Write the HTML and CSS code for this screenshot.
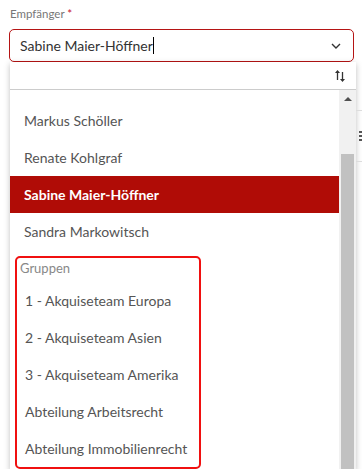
FILE: index.html
```html
<!DOCTYPE html>
<html lang="de">
<head>
    <meta charset="UTF-8">
    <meta name="viewport" content="width=device-width, initial-scale=1.0">
    <title>Empfänger</title>
    <link rel="stylesheet" href="styles.css">
</head>
<body>
<div class="page">
    <div class="backdrop">
        <div class="back-line"></div>
        <div class="back-menu">
            <span></span><span></span><span></span>
        </div>
        <div class="back-line"></div>
    </div>

    <label class="field-label">Empfänger <span class="required">*</span></label>
    <div class="select-box">
        <span class="select-value">Sabine Maier-Höffner<span class="caret"></span></span>
        <svg class="chevron" width="12" height="8" viewBox="0 0 12 8">
            <path d="M2 2 L6 6 L10 2" fill="none" stroke="#333" stroke-width="1.4"/>
        </svg>
    </div>

    <div class="dropdown">
        <div class="dropdown-head">
            <svg class="sort-icon" width="12" height="14" viewBox="0 0 12 14">
                <path d="M3.5 11 V2" stroke="#333" stroke-width="1.3"/>
                <path d="M1 4 L3.5 1 L6 4 Z" fill="#333"/>
                <path d="M8.5 3 V12" stroke="#333" stroke-width="1.3"/>
                <path d="M6 10 L8.5 13 L11 10 Z" fill="#333"/>
            </svg>
        </div>
        <div class="dropdown-body">
            <ul class="options">
                <li class="option">Markus Schöller</li>
                <li class="option">Renate Kohlgraf</li>
                <li class="option selected">Sabine Maier-Höffner</li>
                <li class="option">Sandra Markowitsch</li>
                <li class="group">
                    <div class="group-title">Gruppen</div>
                    <ul class="group-options">
                        <li class="option">1 - Akquiseteam Europa</li>
                        <li class="option">2 - Akquiseteam Asien</li>
                        <li class="option">3 - Akquiseteam Amerika</li>
                        <li class="option">Abteilung Arbeitsrecht</li>
                        <li class="option">Abteilung Immobilienrecht</li>
                    </ul>
                </li>
            </ul>
            <div class="scrollbar">
                <span class="scroll-up"></span>
                <span class="scroll-thumb"></span>
            </div>
        </div>
    </div>
</div>
</body>
</html>
```

FILE: styles.css
```css
* {
    box-sizing: border-box;
}

body {
    margin: 0;
    font-family: Lato, "Open Sans", sans-serif;
    background-color: #fff;
    overflow: hidden;
}

.page {
    position: relative;
    width: 362px;
    height: 469px;
    padding: 5px 0 0 9px;
}

/* page content peeking out to the right of the dropdown */
.backdrop {
    position: absolute;
    top: 110px;
    left: 356px;
    width: 10px;
}

.back-line {
    height: 1px;
    background-color: #ddd;
}

.back-menu {
    display: flex;
    flex-direction: column;
    gap: 2px;
    margin: 20px 0 20px 3px;
}

.back-menu span {
    width: 4px;
    height: 2px;
    background-color: #555;
}

.field-label {
    display: block;
    height: 18px;
    margin-left: 1px;
    font-size: 11.5px;
    line-height: 18px;
    color: #777;
}

.required {
    color: #c8102e;
}

.select-box {
    display: flex;
    align-items: center;
    justify-content: space-between;
    width: 345px;
    height: 33px;
    margin-top: 6px;
    padding: 0 11px 0 10px;
    border: 1px solid #b51414;
    border-radius: 5px;
}

.select-value {
    font-size: 14px;
    color: #333;
    display: flex;
    align-items: center;
}

.caret {
    display: inline-block;
    width: 1px;
    height: 17px;
    background-color: #000;
}

.chevron {
    margin-top: 1px;
}

.dropdown {
    width: 346px;
    margin-left: 1px;
    background-color: #fff;
    box-shadow: 0 2px 6px rgba(0, 0, 0, 0.25);
}

.dropdown-head {
    display: flex;
    justify-content: flex-end;
    align-items: center;
    height: 28px;
    padding-right: 10px;
    border-bottom: 1px solid #ccc;
}

.sort-icon {
    margin-top: 1px;
}

.dropdown-body {
    display: flex;
    height: 380px;
}

.options {
    flex: 1;
    list-style: none;
    margin: 0;
    padding: 12px 0 0;
}

.option {
    height: 37px;
    padding-left: 14px;
    font-size: 14px;
    line-height: 37px;
    color: #555;
}

.option.selected {
    background-color: #b00c06;
    color: #fff;
    font-weight: bold;
}

.group {
    width: 186px;
    margin: 6px 0 0 5px;
    border: 2px solid #f01010;
    border-radius: 5px;
}

.group-title {
    height: 24px;
    padding-left: 3px;
    font-size: 13px;
    line-height: 20px;
    color: #888;
}

.group-options {
    list-style: none;
    margin: 0;
    padding: 0;
}

.group-options .option {
    padding-left: 8px;
}

.scrollbar {
    display: flex;
    flex-direction: column;
    align-items: center;
    width: 17px;
    background-color: #f1f1f1;
}

.scroll-up {
    width: 0;
    height: 0;
    margin-top: 7px;
    border-left: 4px solid transparent;
    border-right: 4px solid transparent;
    border-bottom: 4px solid #505050;
}

.scroll-thumb {
    width: 13px;
    flex: 1;
    margin-top: 53px;
    background-color: #c1c1c1;
}
```
